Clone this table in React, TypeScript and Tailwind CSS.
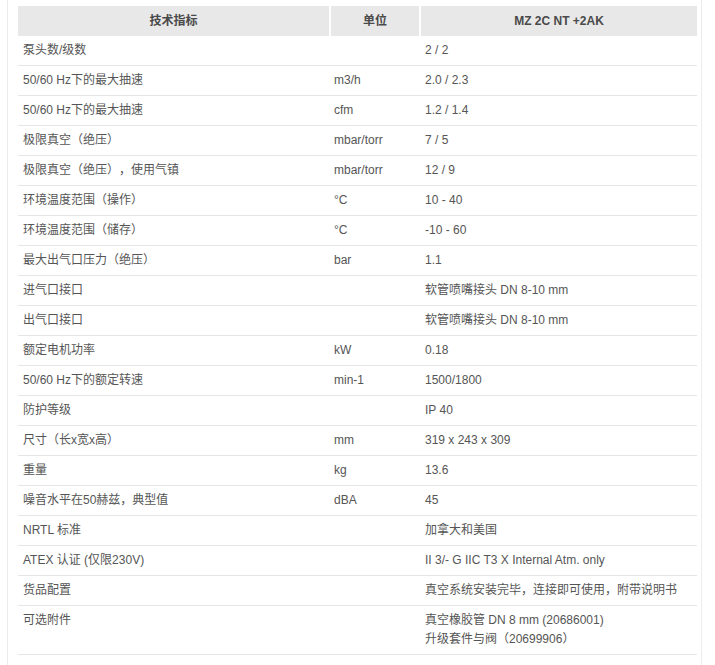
const rows: [string, string, string[]][] = [
  ["泵头数/级数", "", ["2 / 2"]],
  ["50/60 Hz下的最大抽速", "m3/h", ["2.0 / 2.3"]],
  ["50/60 Hz下的最大抽速", "cfm", ["1.2 / 1.4"]],
  ["极限真空（绝压）", "mbar/torr", ["7 / 5"]],
  ["极限真空（绝压），使用气镇", "mbar/torr", ["12 / 9"]],
  ["环境温度范围（操作）", "°C", ["10 - 40"]],
  ["环境温度范围（储存）", "°C", ["-10 - 60"]],
  ["最大出气口压力（绝压）", "bar", ["1.1"]],
  ["进气口接口", "", ["软管喷嘴接头 DN 8-10 mm"]],
  ["出气口接口", "", ["软管喷嘴接头 DN 8-10 mm"]],
  ["额定电机功率", "kW", ["0.18"]],
  ["50/60 Hz下的额定转速", "min-1", ["1500/1800"]],
  ["防护等级", "", ["IP 40"]],
  ["尺寸（长x宽x高）", "mm", ["319 x 243 x 309"]],
  ["重量", "kg", ["13.6"]],
  ["噪音水平在50赫兹，典型值", "dBA", ["45"]],
  ["NRTL 标准", "", ["加拿大和美国"]],
  ["ATEX 认证 (仅限230V)", "", ["II 3/- G IIC T3 X Internal Atm. only"]],
  ["货品配置", "", ["真空系统安装完毕，连接即可使用，附带说明书"]],
  ["可选附件", "", ["真空橡胶管 DN 8 mm (20686001)", "升级套件与阀（20699906）"]],
];

export default function App() {
  return (
    <div
      className="w-[715px] h-[665px] bg-white overflow-hidden text-[12px] leading-[19px] text-[#555] [text-spacing-trim:space-all]"
      style={{ fontFamily: '"Liberation Sans", "Noto Sans CJK SC", sans-serif' }}
    >
      <div className="ml-[7px] w-[695px] h-full border-l border-r border-[#ececec] pt-[6px] pl-[10px]">
        <table className="w-[679px] border-collapse table-fixed">
          <colgroup>
            <col className="w-[312px]" />
            <col className="w-[90px]" />
            <col className="w-[277px]" />
          </colgroup>
          <thead>
            <tr className="bg-[#e8e8e8] h-[30px]">
              <th className="font-bold text-center text-[#4a4a4a] border-r-2 border-white">技术指标</th>
              <th className="font-bold text-center text-[#4a4a4a] border-r-2 border-white">单位</th>
              <th className="font-bold text-center text-[#4a4a4a]">MZ 2C NT +2AK</th>
            </tr>
          </thead>
          <tbody>
            {rows.map(([name, unit, vals], i) => (
              <tr key={i} className="border-b border-[#e6e6e6] align-top">
                <td className="px-[5px] py-[5px]">{name}</td>
                <td className="px-[4px] py-[5px]">{unit}</td>
                <td className="px-[5px] py-[5px]">
                  {vals.map((v) => (
                    <div key={v}>{v}</div>
                  ))}
                </td>
              </tr>
            ))}
          </tbody>
        </table>
      </div>
    </div>
  );
}
